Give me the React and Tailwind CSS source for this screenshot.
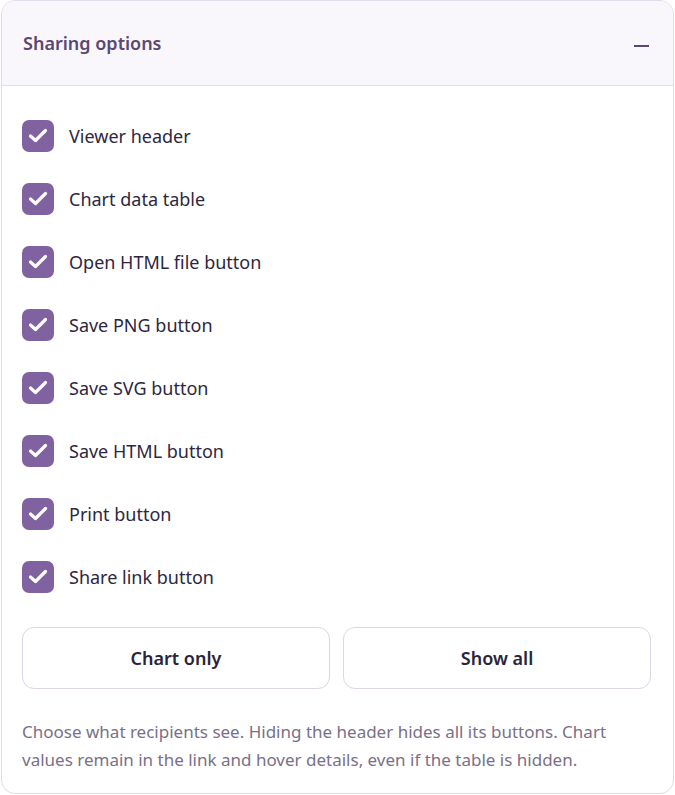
import React from "react";

const items = [
  "Viewer header",
  "Chart data table",
  "Open HTML file button",
  "Save PNG button",
  "Save SVG button",
  "Save HTML button",
  "Print button",
  "Share link button",
];

function Check() {
  return (
    <span className="flex h-8 w-8 shrink-0 items-center justify-center rounded-[7px] bg-[#8062a0]">
      <svg width="32" height="32" viewBox="0 0 32 32" fill="none">
        <path d="M8.5 16 L13.5 20.5 L23.5 10.5" stroke="white" strokeWidth="3.2" strokeLinecap="round" strokeLinejoin="round" />
      </svg>
    </span>
  );
}

export default function App() {
  return (
    <div className="h-[795px] w-[675px] bg-white px-px pb-px" style={{ fontFamily: '"Noto Sans", "Open Sans", sans-serif' }}>
      <div className="flex h-full flex-col overflow-hidden rounded-[14px] border border-[#e2dbeb] bg-white">
        <div className="flex h-[85px] shrink-0 items-center justify-between border-b border-[#e2dbeb] bg-[#f9f6fc] pl-[21px] pr-[24px]">
          <span className="text-[18px] font-semibold text-[#5b4872]">Sharing options</span>
          <span className="mt-[6px] block h-[2px] w-[15px] bg-[#5b4872]" />
        </div>
        <div className="flex flex-col pl-[20px] pr-[22px] pt-[34px]">
          <div className="flex flex-col gap-[31px]">
            {items.map((t) => (
              <label key={t} className="flex h-8 items-center gap-[15px]">
                <Check />
                <span className="text-[18px] text-[#2e2741]">{t}</span>
              </label>
            ))}
          </div>
          <div className="mt-[34px] grid grid-cols-2 gap-[13px]">
            <button className="h-[62px] rounded-[12px] border border-[#ddd5e6] bg-white text-[18px] font-semibold text-[#2a2438]">Chart only</button>
            <button className="h-[62px] rounded-[12px] border border-[#ddd5e6] bg-white text-[18px] font-semibold text-[#2a2438]">Show all</button>
          </div>
          <p className="mt-[29px] pr-[10px] text-[17px] leading-[28px] text-[#7a7088]">
            Choose what recipients see. Hiding the header hides all its buttons. Chart values remain in the link and hover details, even if the table is hidden.
          </p>
        </div>
      </div>
    </div>
  );
}
